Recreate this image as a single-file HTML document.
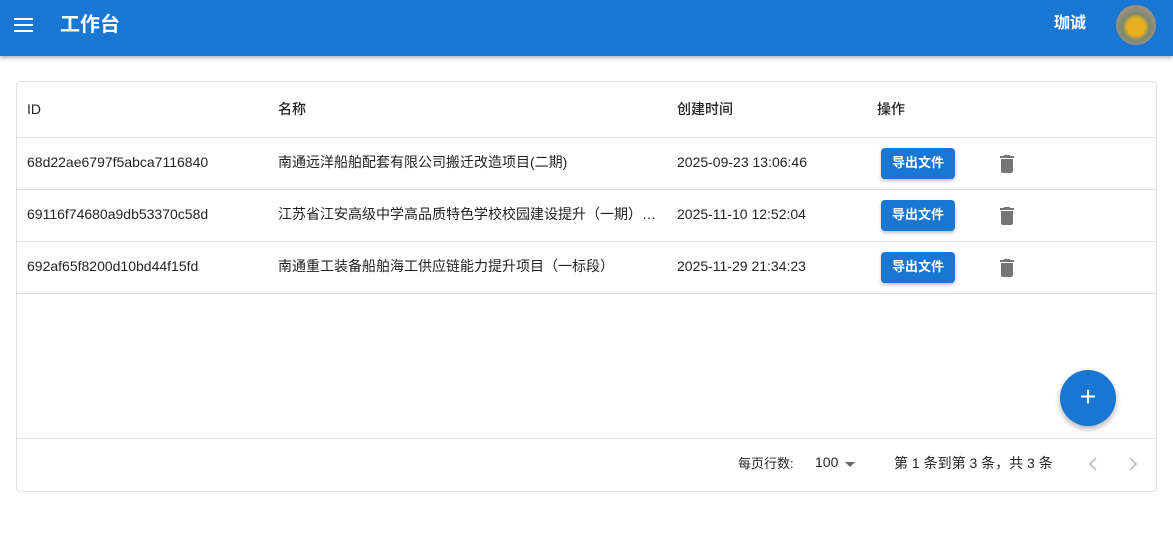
<!DOCTYPE html>
<html><head><meta charset="utf-8"><style>
*{box-sizing:border-box;margin:0;padding:0}
body{width:1173px;height:537px;background:#fff;font-family:"Liberation Sans","Noto Sans CJK SC",sans-serif;color:rgba(0,0,0,.87);position:relative;overflow:hidden}
.bar{position:absolute;left:0;top:0;width:1173px;height:56px;background:#1976d2;box-shadow:0 2px 4px rgba(0,0,0,.3);color:#fff}
.title{position:absolute;left:60px;top:8px;font-size:20px;font-weight:bold}
.user{position:absolute;left:1054px;top:9px;font-size:16px;font-weight:bold}
.av{position:absolute;left:1116px;top:5px;width:40px;height:40px;border-radius:50%;background:radial-gradient(circle at 50% 55%,#e8b020 0 30%,#7a8a70 45%,#a09080 70%)}
.card{position:absolute;left:16px;top:81px;width:1141px;height:411px;border:1px solid #e0e0e0;border-radius:4px}
.row{position:absolute;left:0;width:1139px;border-bottom:1px solid #e0e0e0;font-size:14px}
.row span{position:absolute;top:0;white-space:nowrap}
.row span.c{margin-top:-2px}
.btn{position:absolute;left:864px;width:74px;height:31px;background:#1976d2;color:#fff;border-radius:4px;font-size:13px;font-weight:bold;text-align:center;line-height:29px;box-shadow:0 2px 3px rgba(0,0,0,.25)}
.trash{position:absolute;left:984px}
.fab{position:absolute;left:1060px;top:370px;width:56px;height:56px;border-radius:50%;background:#1976d2;box-shadow:0 3px 6px rgba(0,0,0,.3);color:#fff;font-size:28px;text-align:center;line-height:54px}
.foot{position:absolute;top:454px;font-size:14px}
</style></head><body>
<div class="bar">
<svg style="position:absolute;left:14px;top:17px" width="20" height="16"><rect x="0" y="1" width="19" height="2" fill="#fff"/><rect x="0" y="7" width="19" height="2" fill="#fff"/><rect x="0" y="13" width="19" height="2" fill="#fff"/></svg>
<div class="title">工作台</div>
<div class="user">珈诚</div>
<div class="av"></div>
</div>
<div class="card">
<div class="row" style="top:0;height:56px;font-weight:500"><span style="left:10px;top:19px">ID</span><span class="c" style="left:261px;top:19px">名称</span><span class="c" style="left:660px;top:19px">创建时间</span><span class="c" style="left:860px;top:19px">操作</span></div>
<div class="row" style="top:56px;height:52px"><span style="left:10px;top:16px">68d22ae6797f5abca7116840</span><span class="c" style="left:261px;top:16px">南通远洋船舶配套有限公司搬迁改造项目(二期)</span><span style="left:660px;top:16px">2025-09-23 13:06:46</span></div>
<div class="row" style="top:108px;height:52px"><span style="left:10px;top:16px">69116f74680a9db53370c58d</span><span class="c" style="left:261px;top:16px">江苏省江安高级中学高品质特色学校校园建设提升（一期）…</span><span style="left:660px;top:16px">2025-11-10 12:52:04</span></div>
<div class="row" style="top:160px;height:52px"><span style="left:10px;top:16px">692af65f8200d10bd44f15fd</span><span class="c" style="left:261px;top:16px">南通重工装备船舶海工供应链能力提升项目（一标段）</span><span style="left:660px;top:16px">2025-11-29 21:34:23</span></div>
<div class="row" style="top:212px;height:145px"></div>
</div>
<div class="btn" style="left:881px;top:148px">导出文件</div>
<div class="btn" style="left:881px;top:200px">导出文件</div>
<div class="btn" style="left:881px;top:252px">导出文件</div>
<svg class="trash" style="left:1000px;top:155px" width="14" height="18" viewBox="5 3 14 18"><path d="M6 19c0 1.1.9 2 2 2h8c1.1 0 2-.9 2-2V7H6v12zM19 4h-3.5l-1-1h-5l-1 1H5v2h14V4z" fill="#757575"/></svg>
<svg class="trash" style="left:1000px;top:207px" width="14" height="18" viewBox="5 3 14 18"><path d="M6 19c0 1.1.9 2 2 2h8c1.1 0 2-.9 2-2V7H6v12zM19 4h-3.5l-1-1h-5l-1 1H5v2h14V4z" fill="#757575"/></svg>
<svg class="trash" style="left:1000px;top:259px" width="14" height="18" viewBox="5 3 14 18"><path d="M6 19c0 1.1.9 2 2 2h8c1.1 0 2-.9 2-2V7H6v12zM19 4h-3.5l-1-1h-5l-1 1H5v2h14V4z" fill="#757575"/></svg>
<div class="fab">+</div>
<div class="foot" style="left:738px;font-size:13px;top:453px">每页行数:</div>
<div class="foot" style="left:815px;top:454px">100</div>
<svg style="position:absolute;left:845px;top:462px" width="12" height="6"><path d="M0 0h10l-5 5z" fill="#666"/></svg>
<div class="foot" style="left:894px;top:453px">第 1 条到第 3 条，共 3 条</div>
<svg style="position:absolute;left:1088px;top:457px" width="10" height="14"><path d="M8 1L2 7l6 6" stroke="#bbb" stroke-width="1.6" fill="none"/></svg>
<svg style="position:absolute;left:1128px;top:457px" width="10" height="14"><path d="M2 1l6 6-6 6" stroke="#bbb" stroke-width="1.6" fill="none"/></svg>
</body></html>
